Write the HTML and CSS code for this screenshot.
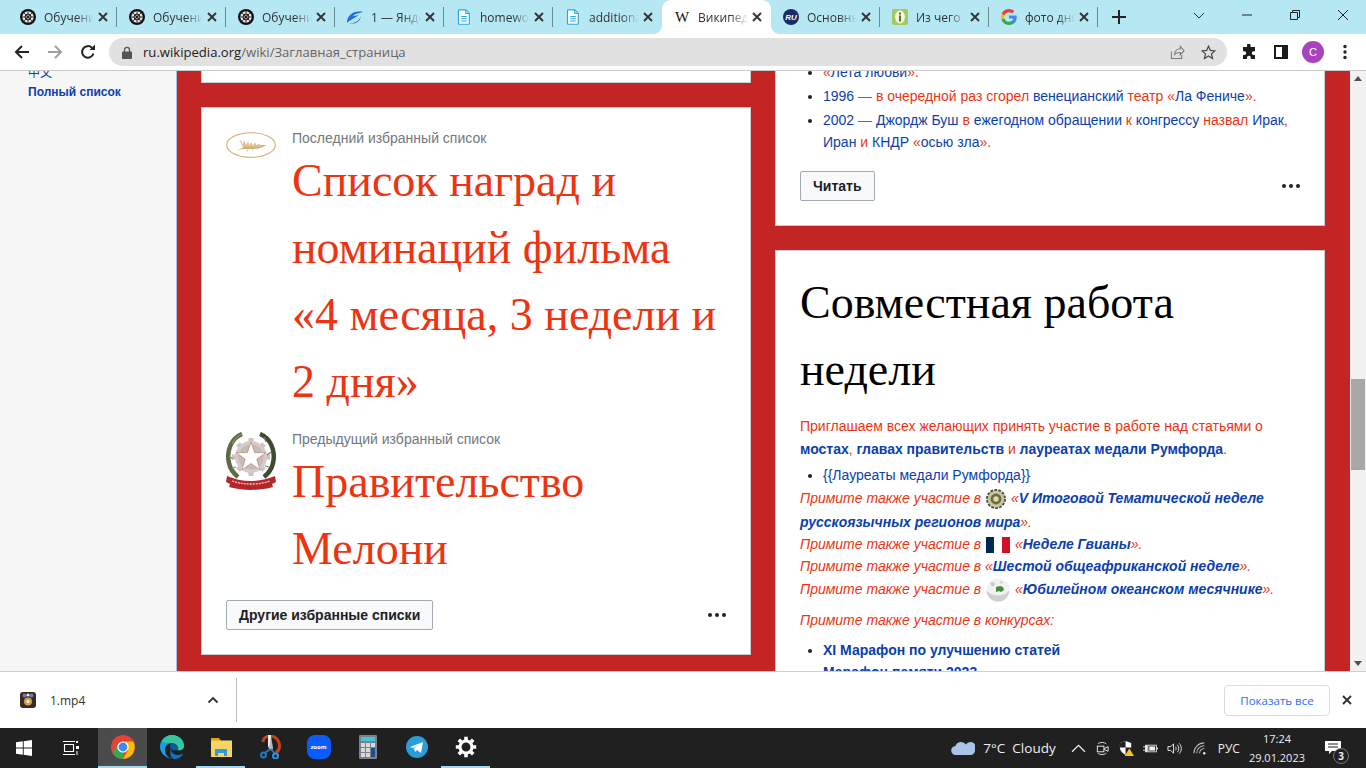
FILE: index.html
```html
<!DOCTYPE html>
<html lang="ru">
<head>
<meta charset="utf-8">
<title>Википедия</title>
<link rel="stylesheet" href="styles.css">
</head>
<body>
<svg class="defs" width="0" height="0" aria-hidden="true">
  <symbol id="brain" viewBox="0 0 16 16">
    <circle cx="8" cy="8" r="8" fill="#111"/>
    <circle cx="8" cy="8" r="5.700" fill="#e2e2e2"/>
    <circle cx="8" cy="8" r="3" fill="none" stroke="#111" stroke-width=".9"/>
    <path d="M8 2.300v11.400M2.300 8h11.400M4 4l8 8M12 4l-8 8" fill="none" stroke="#111" stroke-width=".8"/>
  </symbol>
  <symbol id="doc" viewBox="0 0 16 18">
    <path d="M2.500 1h7.500l4 4v11.500a.7.7 0 0 1-.7.7H2.500a.7.7 0 0 1-.7-.7V1.700a.7.7 0 0 1 .7-.7z" fill="#fff" stroke="#2aa8e0" stroke-width="1.300"/>
    <path d="M10 1v4h4M4.800 8.500h6.400M4.800 11h6.400M4.800 13.500h6.400" fill="none" stroke="#2aa8e0" stroke-width="1.200"/>
  </symbol>
  <symbol id="x" viewBox="0 0 10 10">
    <path d="M1 1l8 8M9 1l-8 8" fill="none" stroke="#333" stroke-width="1.900"/>
  </symbol>
</svg>

<div class="tabstrip">
  <div class="tab"><svg class="fav"><use href="#brain"/></svg><span class="tab-title">Обучение</span><svg class="tab-x"><use href="#x"/></svg></div>
  <div class="tab"><svg class="fav"><use href="#brain"/></svg><span class="tab-title">Обучение</span><svg class="tab-x"><use href="#x"/></svg></div>
  <div class="tab"><svg class="fav"><use href="#brain"/></svg><span class="tab-title">Обучение</span><svg class="tab-x"><use href="#x"/></svg></div>
  <div class="tab">
    <svg class="fav" viewBox="0 0 16 16"><path d="M0 14C0 6 7 1 16 3c-3 0-4 3-7 5-3 2-6 3-9 6z" fill="#1f6fe0"/><path d="M2 14c4 1 10-1 12-7-1 6-7 9-12 7z" fill="#123d8f"/><path d="M6 7c2-2 5-3 8-3-2 2-5 3-8 3z" fill="#cfe9ff"/></svg>
    <span class="tab-title">1 — Яндекс</span><svg class="tab-x"><use href="#x"/></svg></div>
  <div class="tab"><svg class="fav"><use href="#doc"/></svg><span class="tab-title">homework</span><svg class="tab-x"><use href="#x"/></svg></div>
  <div class="tab tab-nosep"><svg class="fav"><use href="#doc"/></svg><span class="tab-title">additional</span><svg class="tab-x"><use href="#x"/></svg></div>
  <div class="tab tab-active tab-nosep"><span class="fav fav-w">W</span><span class="tab-title">Википедия</span><svg class="tab-x"><use href="#x"/></svg></div>
  <div class="tab">
    <svg class="fav" viewBox="0 0 16 16"><circle cx="8" cy="8" r="8" fill="#1d2a63"/><text x="8" y="10.800" text-anchor="middle" class="ru-mark">RU</text></svg>
    <span class="tab-title">Основные</span><svg class="tab-x"><use href="#x"/></svg></div>
  <div class="tab">
    <svg class="fav" viewBox="0 0 16 16"><rect width="16" height="16" rx="2" fill="#a4c95f"/><ellipse cx="8" cy="8" rx="5" ry="6.500" fill="#f3f5dc"/><rect x="7" y="6.500" width="2" height="6" fill="#4c7a22"/><rect x="7" y="3.500" width="2" height="2" fill="#4c7a22"/></svg>
    <span class="tab-title">Из чего</span><svg class="tab-x"><use href="#x"/></svg></div>
  <div class="tab">
    <svg class="fav" viewBox="0 0 16 16"><path d="M15.700 8.200c0-.6 0-1.100-.1-1.600H8v3h4.400c-.2 1-.8 1.900-1.600 2.400v2h2.600c1.500-1.400 2.300-3.400 2.300-5.800z" fill="#4285f4"/><path d="M8 16c2.200 0 4-.7 5.400-2l-2.600-2c-.7.500-1.700.8-2.800.8-2.100 0-3.900-1.400-4.600-3.400H.7v2.100C2 14.200 4.800 16 8 16z" fill="#34a853"/><path d="M3.400 9.400c-.4-1-.4-2 0-3V4.300H.7c-.9 1.800-.9 3.900 0 5.700l2.700-.6z" fill="#fbbc05"/><path d="M8 3.200c1.200 0 2.300.4 3.100 1.200l2.300-2.300C12 .8 10.200 0 8 0 4.800 0 2 1.800.7 4.300l2.700 2.100C4.100 4.500 5.900 3.200 8 3.200z" fill="#ea4335"/></svg>
    <span class="tab-title">фото дня</span><svg class="tab-x"><use href="#x"/></svg></div>
  <svg class="newtab" viewBox="0 0 14 14"><path d="M7 0v14M0 7h14" stroke="#222" stroke-width="2" fill="none"/></svg>
  <div class="winctl">
    <svg class="wc" viewBox="0 0 12 12"><path d="M1 4l5 5 5-5" fill="none" stroke="#333" stroke-width="1"/></svg>
    <svg class="wc" viewBox="0 0 12 12"><path d="M1 6h10" fill="none" stroke="#222" stroke-width="1"/></svg>
    <svg class="wc" viewBox="0 0 12 12"><path d="M1.500 3.500h7v7h-7zM3.500 3.500v-2h7v7h-2" fill="none" stroke="#222" stroke-width="1"/></svg>
    <svg class="wc" viewBox="0 0 12 12"><path d="M1 1l10 10M11 1L1 11" fill="none" stroke="#222" stroke-width="1"/></svg>
  </div>
</div>

<div class="toolbar">
  <svg class="tb-ico" viewBox="0 0 16 16"><path d="M15 8H2M8 2L2 8l6 6" fill="none" stroke="#222" stroke-width="2"/></svg>
  <svg class="tb-ico" viewBox="0 0 16 16"><path d="M1 8h13M8 2l6 6-6 6" fill="none" stroke="#a0a0a0" stroke-width="2"/></svg>
  <svg class="tb-ico tb-reload" viewBox="0 0 16 16"><path d="M13.500 9.500A5.800 5.800 0 1 1 12 3.800" fill="none" stroke="#222" stroke-width="2"/><path d="M9.500 6h5.500V.5z" fill="#222"/></svg>
  <div class="omnibox">
    <svg class="lock" viewBox="0 0 10 13"><path d="M2.500 6V3.800a2.500 2.500 0 0 1 5 0V6" fill="none" stroke="#555" stroke-width="1.300"/><rect y="5.500" width="10" height="7.500" rx="1" fill="#555"/></svg>
    <span class="url"><span class="url-host">ru.wikipedia.org</span>/wiki/Заглавная_страница</span>
    <svg class="omni-ico omni-share" viewBox="0 0 16 16"><path d="M1.500 7v7.500h11V11M5 10c0-4 3-6 6-6V1.500L15 6l-4 4.500V8c-3 0-5 .5-6 2z" fill="none" stroke="#777" stroke-width="1.100"/></svg>
    <svg class="omni-ico" viewBox="0 0 16 16"><path d="M8 1.300l2 4.500 4.900.5-3.700 3.200 1.100 4.800L8 11.800l-4.300 2.500 1.100-4.800L1.100 6.300 6 5.800z" fill="none" stroke="#444" stroke-width="1.300"/></svg>
  </div>
  <svg class="tb-right tb-puzzle" viewBox="0 0 16 16"><path d="M6 1.500a1.800 1.800 0 0 1 3.600 0V3H14v4.200h-1.300a1.900 1.900 0 0 0 0 3.800H14v4H9.800v-1.300a1.900 1.900 0 0 0-3.800 0V15H2v-4h1.300a1.900 1.900 0 0 0 0-3.800H2V3h4z" fill="#1c1c1c"/></svg>
  <svg class="tb-right tb-panel" viewBox="0 0 14 14"><rect x="1" y="1" width="12" height="12" fill="#fff" stroke="#1c1c1c" stroke-width="2"/><rect x="8" y="1" width="5" height="12" fill="#1c1c1c"/></svg>
  <span class="avatar">C</span>
  <svg class="tb-right tb-dots" viewBox="0 0 4 16"><circle cx="2" cy="2.500" r="1.700" fill="#222"/><circle cx="2" cy="8" r="1.700" fill="#222"/><circle cx="2" cy="13.500" r="1.700" fill="#222"/></svg>
</div>

<div class="viewport">
  <aside class="sidebar">
    <div class="side-links">
      <a class="side-cjk">中文</a>
      <a class="side-all">Полный список</a>
    </div>
  </aside>
  <main class="main">
    <div class="column">
      <section class="card card-stub"></section>
      <section class="card">
        <div class="featured">
          <div class="fig">
            <svg class="palm" viewBox="0 0 50 26">
              <ellipse cx="25" cy="13" rx="24.300" ry="12.300" fill="#fff" stroke="#d2ad72" stroke-width="1.100"/>
              <path d="M10 19c3-1 6-3 8-4 8-1 15-2 23-2-5 3-10 4-16 4-2 0-5 0-7 0-2 0-5 1-8 2z" fill="#d3ae72"/>
              <path d="M14 8l3 6 1-5 2 5 2-4 1 4 2-3 2 3 2-3 1 3 3-2 1 2 3-1-2 2H17zM21 20l1-3M26 19l1-2M31 18l1-2" fill="#e0c492" stroke="#d3ae72" stroke-width=".5"/>
            </svg>
          </div>
          <div class="feat-body">
            <div class="feat-label">Последний избранный список</div>
            <h2 class="feat-title">Список наград и номинаций фильма «4 месяца, 3 недели и 2 дня»</h2>
          </div>
        </div>
        <div class="featured featured-next">
          <div class="fig">
            <svg class="emblem" viewBox="0 0 50 58">
              <path d="M25 6v5M25 39v5M6 25h5M39 25h5M12 12l3.500 3.500M34.500 34.500L38 38M38 12l-3.500 3.500M15.500 34.500L12 38" stroke="#c9c3bf" stroke-width="5"/>
              <circle cx="25" cy="25" r="16" fill="#d2cdc9"/>
              <circle cx="25" cy="25" r="12.500" fill="#c2bbb7"/>
              <path d="M25 10l3.600 10.600h11.200l-9 6.600 3.400 10.800-9.200-6.500-9.200 6.500 3.400-10.800-9-6.600h11.200z" fill="#fff" stroke="#c0524c" stroke-width=".5"/>
              <path d="M16 2C6 6 0 18 3 31c1 5 4 10 9 14" fill="none" stroke="#5d6a45" stroke-width="4.500"/>
              <path d="M16 2c-4 2-8 5-10 10M3 24l4 3M6 36l4-1" fill="none" stroke="#87936c" stroke-width="1.200"/>
              <path d="M34 2c10 4 16 16 13 29-1 5-4 10-9 14" fill="none" stroke="#3e4b30" stroke-width="4.500"/>
              <path d="M38 5l2 5M45 20l-4 3M43 35l-4-1" fill="none" stroke="#77845f" stroke-width="1.200"/>
              <path d="M1 44c7 3 15 5 24 5s17-2 24-5l1 6-4 2 1 3c-7 2-15 3-22 3s-15-1-22-3l1-3-4-2z" fill="#b5262b"/>
              <path d="M6 49c6 2 12 3 19 3s13-1 19-3" fill="none" stroke="#eecfc8" stroke-width="1.300" stroke-dasharray="2 1"/>
            </svg>
          </div>
          <div class="feat-body">
            <div class="feat-label">Предыдущий избранный список</div>
            <h2 class="feat-title">Правительство Мелони</h2>
          </div>
        </div>
        <div class="card-foot card-foot-left">
          <a class="btn">Другие избранные списки</a>
          <span class="more"><i></i><i></i><i></i></span>
        </div>
      </section>
    </div>

    <div class="column">
      <section class="card card-events">
        <ul class="list list-clipped">
          <li><span class="r">«</span><a>Лета любви</a><span class="r">».</span></li>
          <li><a>1996</a> <span class="r">— в очередной раз сгорел</span> <a>венецианский</a> <span class="r">театр «</span><a>Ла Фениче</a><span class="r">».</span></li>
          <li><a>2002</a> <span class="r">—</span> <a>Джордж Буш</a> <span class="r">в</span> <a>ежегодном обращении</a> <span class="r">к</span> <a>конгрессу</a> <span class="r">назвал</span> <a>Ирак</a><span class="r">,</span> <a>Иран</a> <span class="r">и</span> <a>КНДР</a> <span class="r">«</span><a>осью зла</a><span class="r">».</span></li>
        </ul>
        <div class="card-foot card-foot-right">
          <a class="btn">Читать</a>
          <span class="more"><i></i><i></i><i></i></span>
        </div>
      </section>
      <section class="card card-collab">
        <h2 class="collab-title">Совместная работа недели</h2>
        <p class="para"><span class="r">Приглашаем всех желающих принять участие в работе над статьями о</span> <a class="b">мостах</a><span class="r">,</span> <a class="b">главах правительств</a> <span class="r">и</span> <a class="b">лауреатах медали Румфорда</a><span class="r">.</span></p>
        <ul class="list list-tpl"><li><a>{{Лауреаты медали Румфорда}}</a></li></ul>
        <div class="invites">
          <div class="r-i invite-tall">Примите также участие в
            <svg class="inl" viewBox="0 0 22 22"><circle cx="11" cy="11" r="10" fill="#c8c4a4"/><circle cx="11" cy="11" r="10" fill="none" stroke="#44512c" stroke-width="2" stroke-dasharray="3 1.500"/><circle cx="11" cy="11" r="6" fill="#6b6a42"/><circle cx="11" cy="11" r="3" fill="#e2d9a0"/></svg>
            «<a class="b">V Итоговой Тематической неделе русскоязычных регионов мира</a>».</div>
          <div class="r-i">Примите также участие в
            <svg class="inl inl-flag" viewBox="0 0 3 2"><rect width="1" height="2" fill="#002654"/><rect x="1" width="1" height="2" fill="#fff"/><rect x="2" width="1" height="2" fill="#ce1126"/></svg>
            «<a class="b">Неделе Гвианы</a>».</div>
          <div class="r-i">Примите также участие в «<a class="b">Шестой общеафриканской неделе</a>».</div>
          <div class="r-i">Примите также участие в
            <svg class="inl inl-globe" viewBox="0 0 24 24"><circle cx="12" cy="12" r="11.500" fill="#f2f2f2"/><path d="M0.500 12a11.500 11.500 0 0 0 23 0c-4 7-19 7-23 0z" fill="#cfcfcf"/><path d="M10 9l4-1 3 1 1 3-3 2-2-1-3 1z" fill="#3f8a3c"/><path d="M4 5l4-1 1 3-3 2zM14 3l3 1-2 2z" fill="#c9c9c9"/></svg>
            «<a class="b">Юбилейном океанском месячнике</a>».</div>
        </div>
        <p class="r-i contest">Примите также участие в конкурсах:</p>
        <ul class="list list-bold">
          <li><a class="b">XI Марафон по улучшению статей</a></li>
          <li><a class="b">Марафон памяти 2023</a></li>
        </ul>
      </section>
    </div>
  </main>
  <div class="scrollbar">
    <span class="sb-up"></span>
    <span class="sb-thumb"></span>
    <span class="sb-down"></span>
  </div>
</div>

<div class="downloads">
  <div class="dl-item">
    <svg class="dl-ico" viewBox="0 0 16 16"><rect width="16" height="16" rx="3" fill="#3a2a20"/><circle cx="8" cy="9.500" r="4" fill="#c9a15a"/><circle cx="8" cy="9.500" r="1.500" fill="#fff2c0"/><circle cx="4.500" cy="3.500" r="2" fill="#6f79c8"/><circle cx="11.500" cy="3.500" r="2" fill="#6f79c8"/><circle cx="8" cy="3" r="1.500" fill="#eee"/></svg>
    <span class="dl-name">1.mp4</span>
    <svg class="dl-chev" viewBox="0 0 12 8"><path d="M1.500 6.500L6 2l4.500 4.500" fill="none" stroke="#333" stroke-width="1.800"/></svg>
  </div>
  <div class="dl-right">
    <a class="dl-btn">Показать все</a>
    <svg class="dl-x" viewBox="0 0 10 10"><use href="#x"/></svg>
  </div>
</div>

<div class="taskbar">
  <div class="tk-start">
    <svg class="tk-ico" viewBox="0 0 16 16"><path d="M0 2.300L6.800 1.300v6.300H0zM7.700 1.200L16 0v7.600H7.700zM0 8.400h6.800v6.300L0 13.700zM7.700 8.400H16V16l-8.300-1.200z" fill="#fff"/></svg>
  </div>
  <div class="tk-view">
    <svg class="tk-ico" viewBox="0 0 16 16"><path d="M1.500 4.500h9v7h-9zM0 1.500h12M0 14.500h12" fill="none" stroke="#fff" stroke-width="1.100"/><rect x="13" y="1" width="2" height="2" fill="#fff"/><rect x="13" y="6" width="3" height="3" fill="#fff"/><path d="M14 11v4" stroke="#fff"/></svg>
  </div>
  <div class="tk-app tk-active tk-open">
    <svg class="tk-app-ico" viewBox="0 0 24 24"><circle cx="12" cy="12" r="12" fill="#ea4335"/><path d="M12 24a12 12 0 0 1-10.400-6L7 8.500l5 8.500z" fill="#34a853"/><path d="M12 6.500h10.400A12 12 0 0 1 12 24l5.200-9z" fill="#fbbc05"/><circle cx="12" cy="12" r="5.600" fill="#fff"/><circle cx="12" cy="12" r="4.400" fill="#4285f4"/></svg>
  </div>
  <div class="tk-app">
    <svg class="tk-app-ico" viewBox="0 0 24 24"><path d="M12 0c7 0 12 5 12 11 0 3-3 5-6 4 1-3-1-7-6-7-4 0-7 3-7 7 0 5 4 9 9 9C6 24 0 18 0 12 0 5 5 0 12 0z" fill="#1b9de2"/><path d="M12 8c5 0 7 4 6 7-3 1-8 0-8-3 0-2 1-3 2-4z" fill="#0c59a4"/><path d="M2 6c3-5 8-6 10-6 7 0 12 5 12 11 0 3-3 5-6 4 1-3-1-7-6-7-4 0-8 0-10-2z" fill="#37c6a0"/><path d="M14 24c4 0 8-2 9-6-2 2-6 3-9 1-2-1-3-3-3-5-2 4 0 9 3 10z" fill="#1472c4"/></svg>
  </div>
  <div class="tk-app tk-open">
    <svg class="tk-app-ico" viewBox="0 0 24 24"><path d="M2 3h8l2 3v3H2z" fill="#e3a21f"/><rect x="2" y="5.500" width="21" height="16.500" fill="#f6d565"/><path d="M6 21v-7h12v7h-3v-3H9v3z" fill="#2f9ae0"/></svg>
  </div>
  <div class="tk-app">
    <svg class="tk-app-ico" viewBox="0 0 24 24"><path d="M5 7C5 1 14-1 19 4c4 5 3 11-1 14" fill="none" stroke="#c8401c" stroke-width="3"/><path d="M13 0v13l-1 3-2-5V0z" fill="#eee"/><path d="M13 1l2 12 -1 3-3-3z" fill="#b8b8b8"/><path d="M12 14l-5 4M13 14l4 5" stroke="#1f78c8" stroke-width="2"/><circle cx="5.500" cy="20" r="2.500" fill="none" stroke="#1f78c8" stroke-width="2"/><circle cx="17.500" cy="21" r="2.500" fill="none" stroke="#1f9ae8" stroke-width="2"/></svg>
  </div>
  <div class="tk-app">
    <span class="zoom-tile">zoom</span>
  </div>
  <div class="tk-app">
    <svg class="tk-app-ico" viewBox="0 0 18 24"><rect width="18" height="24" rx="1" fill="#7b8188"/><rect x="2" y="2" width="14" height="4" fill="#43c6d8"/><path d="M2 8h4v4H2zM7 8h4v4H7zM12 8h4v4h-4zM2 13h4v4H2zM7 13h4v4H7zM2 18h4v4H2zM7 18h4v4H7z" fill="#d5d8dc"/><rect x="12" y="13" width="4" height="9" fill="#1f4e8c"/></svg>
  </div>
  <div class="tk-app">
    <svg class="tk-app-ico" viewBox="0 0 24 24"><circle cx="12" cy="12" r="11" fill="#2a9ed8"/><path d="M5 12l13-5-2 11-4-3-2 2-1-4 6-4-7 4z" fill="#fff"/></svg>
  </div>
  <div class="tk-app tk-open">
    <svg class="tk-app-ico" viewBox="0 0 20 20"><path d="M10 1.500v3M10 15.500v3M1.500 10h3M15.500 10h3M4 4l2.100 2.100M13.900 13.900L16 16M16 4l-2.100 2.100M6.100 13.900L4 16" stroke="#fff" stroke-width="3"/><circle cx="10" cy="10" r="5" fill="none" stroke="#fff" stroke-width="2.600"/></svg>
  </div>
  <div class="tk-tray">
    <svg class="tr-cloud" viewBox="0 0 24 14"><path d="M5 14a4.500 4.500 0 0 1-.6-9A6 6 0 0 1 15 3.500 5.200 5.200 0 0 1 24 9a4.700 4.700 0 0 1-4.500 5z" fill="#a9c4e8"/></svg>
    <span class="tr-weather">7°C&nbsp; Cloudy</span>
    <svg class="tr-ico tr-first" viewBox="0 0 14 14"><path d="M1 10l6-6 6 6" fill="none" stroke="#eee" stroke-width="1.200"/></svg>
    <svg class="tr-ico" viewBox="0 0 14 16"><path d="M2 3c2-2 7-2 9 0M2 13c2 2 7 2 9 0" fill="none" stroke="#ddd"/><rect x="1.500" y="5.500" width="7" height="6" fill="none" stroke="#eee"/><path d="M9 8l4-2v5l-4-2z" fill="none" stroke="#eee"/></svg>
    <svg class="tr-ico" viewBox="0 0 16 16"><path d="M7 0l6 2v5c0 4-3 6-6 8-3-2-6-4-6-8V2z" fill="#fff"/><path d="M1 7h6V0l-6 2zM7 7h6v1c0 3-3 5-6 7z" fill="#202020"/><path d="M11 8l5 8H6z" fill="#f5c518"/></svg>
    <svg class="tr-ico" viewBox="0 0 18 14"><path d="M0 5h3M0 9h3M3 3h2v8H3z" stroke="#eee" fill="#eee"/><rect x="6" y="3" width="10" height="8" fill="none" stroke="#eee"/><rect x="7.500" y="4.500" width="7" height="5" fill="#eee"/><rect x="16.500" y="6" width="1.500" height="2" fill="#eee"/></svg>
    <svg class="tr-ico" viewBox="0 0 16 14"><path d="M1 5h3l3-3v10L4 9H1z" fill="none" stroke="#eee"/><path d="M9 5c1 1 1 3 0 4M11 3c2 2 2 6 0 8M13 1.500c3 3 3 8 0 11" fill="none" stroke="#eee"/></svg>
    <svg class="tr-ico tr-wifi" viewBox="0 0 16 14"><path d="M1 12A11 11 0 0 1 12 1M4 12a8 8 0 0 1 8-8M7 12a5 5 0 0 1 5-5" fill="none" stroke="#bbb" stroke-width="1.100"/><circle cx="12" cy="12" r="1.300" fill="#eee"/></svg>
    <span class="tr-lang">РУС</span>
    <div class="tr-clock"><span>17:24</span><span>29.01.2023</span></div>
    <div class="tr-note">
      <svg class="tr-msg" viewBox="0 0 16 14"><path d="M0 0h16v10H7l-3 3v-3H0z" fill="#fff"/><path d="M3 3h10M3 6h10" stroke="#202020"/></svg>
      <span class="tr-badge">3</span>
    </div>
  </div>
</div>
</body>
</html>
```

FILE: styles.css
```css
* { box-sizing: border-box; }
html, body { margin: 0; height: 100%; overflow: hidden; }
body {
  display: flex;
  flex-direction: column;
  width: 1366px;
  height: 768px;
  font-family: "Liberation Sans", Arial, sans-serif;
  background: #fff;
}
.defs { position: absolute; }

/* tab strip */
.tabstrip {
  flex: none;
  height: 34px;
  display: flex;
  align-items: center;
  padding-left: 8px;
  background: #b6e8f3;
  font-family: "Open Sans", sans-serif;
  font-size: 12px;
  color: #333;
}
.tab {
  position: relative;
  flex: none;
  width: 109px;
  height: 34px;
  display: flex;
  align-items: center;
  padding-left: 12px;
}
.tab::after {
  content: "";
  position: absolute;
  right: 0;
  top: 7px;
  width: 1px;
  height: 20px;
  background: #6d8a91;
}
.tab-nosep::after { content: none; }
.tab-active {
  background: #fff;
  border-radius: 9px 9px 0 0;
}
.tab-active::before,
.tab-active::after {
  content: "";
  position: absolute;
  bottom: 0;
  top: auto;
  width: 8px;
  height: 8px;
  background: radial-gradient(circle at 0 0, transparent 7.500px, #fff 8px);
}
.tab-active::before {
  left: -8px;
}
.tab-active::after {
  right: -8px;
  background: radial-gradient(circle at 100% 0, transparent 7.500px, #fff 8px);
}
.fav { flex: none; width: 16px; height: 16px; }
.fav-w {
  font-family: "Liberation Serif", serif;
  font-size: 15px;
  line-height: 16px;
  text-align: center;
  color: #111;
}
.ru-mark { font: italic 700 8px "Liberation Sans", sans-serif; fill: #fff; }
.tab-title {
  flex: none;
  width: 50px;
  margin-left: 8px;
  overflow: hidden;
  white-space: nowrap;
  -webkit-mask-image: linear-gradient(90deg, #000 65%, transparent 100%);
  mask-image: linear-gradient(90deg, #000 65%, transparent 100%);
}
.tab-x { flex: none; width: 10px; height: 10px; margin-left: 4px; }
.newtab { flex: none; width: 14px; height: 14px; margin-left: 14px; }
.winctl {
  margin-left: auto;
  display: flex;
  align-items: center;
  height: 34px;
  padding-right: 17px;
  gap: 36px;
}
.wc { width: 12px; height: 12px; margin-top: -4px; }

/* toolbar */
.toolbar {
  flex: none;
  height: 37px;
  display: flex;
  align-items: center;
  padding-left: 14px;
  background: #fff;
  border-bottom: 1px solid #c9c9c9;
}
.tb-ico { flex: none; width: 16px; height: 16px; margin-right: 17px; }
.tb-reload { margin-right: 13px; }
.omnibox {
  flex: none;
  width: 1118px;
  height: 28px;
  display: flex;
  align-items: center;
  padding-left: 13px;
  border-radius: 14px;
  background: #e1e1e1;
}
.lock { width: 10px; height: 13px; flex: none; }
.url { margin-left: 11px; font-family: "Open Sans", sans-serif; font-size: 13.100px; color: #666; white-space: nowrap; }
.url-host { color: #222; }
.omni-ico { flex: none; width: 15px; height: 15px; margin-left: 16px; }
.omni-share { margin-left: auto; }
.omni-ico:last-child { margin-right: 11px; }
.tb-right { flex: none; }
.tb-puzzle { width: 16px; height: 16px; margin-left: 14px; }
.tb-panel { width: 14px; height: 14px; margin-left: 17px; }
.avatar {
  flex: none;
  width: 22px;
  height: 22px;
  margin-left: 14px;
  border-radius: 50%;
  background: #a744bd;
  color: #fff;
  font-size: 11px;
  line-height: 22px;
  text-align: center;
}
.tb-dots { width: 4px; height: 16px; margin-left: 19px; }

/* page viewport */
.viewport {
  flex: none;
  height: 600px;
  display: flex;
  overflow: hidden;
  font-size: 14px;
  color: #202122;
}
.sidebar {
  flex: none;
  width: 177px;
  background: #f6f6f6;
  border-right: 1px solid #a7c0dc;
  padding-left: 28px;
  font-size: 12px;
}
.side-links { margin-top: -9px; display: flex; flex-direction: column; }
.side-links a { color: #0b3eae; line-height: 20px; }
.side-cjk { font-family: "Noto Sans CJK SC", sans-serif; }
.side-all { font-weight: 700; }

.main {
  flex: none;
  width: 1173px;
  height: 600px;
  display: flex;
  gap: 24px;
  padding-left: 24px;
  overflow: hidden;
  background: #c32525;
}
.column { flex: none; width: 550px; display: flex; flex-direction: column; gap: 24px; }
.card {
  flex: none;
  background: #fff;
  border: 1px solid #c8ccd1;
  padding: 19px 24px 24px;
}
.card-stub { height: 12px; padding: 0; border-top: none; }
.featured { display: flex; }
.featured-next { margin-top: 11px; }
.fig { flex: none; width: 66px; }
.palm { display: block; width: 50px; height: 26px; margin-top: 5px; }
.emblem { display: block; width: 50px; height: 58px; margin-top: 4px; }
.feat-body { flex: 1; min-width: 0; }
.feat-label { font-size: 14px; line-height: 22px; color: #72777d; }
.feat-title, .collab-title {
  margin: -2px 0 2px;
  font-family: "Liberation Serif", serif;
  font-size: 46px;
  font-weight: 400;
  line-height: 67px;
}
.feat-title { color: #ee3311; }
.collab-title { margin-top: -1px; color: #000; }
.card-foot { display: flex; align-items: center; justify-content: space-between; }
.card-foot-left { margin-top: 16px; }
.card-foot-right { margin-top: 18px; }
.btn {
  height: 30px;
  padding: 0 12px;
  border: 1px solid #a2a9b1;
  border-radius: 2px;
  background: #f8f9fa;
  color: #202122;
  font-weight: 700;
  line-height: 28px;
}
.more { display: flex; gap: 3px; }
.more i { width: 4px; height: 4px; border-radius: 50%; background: #222; }

.r { color: #ee3311; }
.r-i { color: #ee3311; font-style: italic; }
a { color: #0b3eae; }
a.b { font-weight: 700; }
.list { margin: 0; padding: 0 0 0 23px; line-height: 22.400px; }
.list li { margin-bottom: 1.400px; }
.list-clipped { margin-top: -28px; }
.card-events { padding-top: 18px; border-top: none; }
.para { margin: 0; line-height: 22.400px; }
.collab-title + .para { margin-top: 12px; }
.list-tpl { margin-top: 4px; }
.invites { margin-top: -2px; line-height: 22.400px; }
.invite-tall { margin-bottom: -1px; line-height: 24px; }
.inl { width: 20px; height: 20px; vertical-align: middle; margin: 0 1px; }
.inl-flag { width: 24px; height: 16px; margin: -3px 1px; }
.inl-globe { width: 24px; height: 24px; }
.contest { margin: 7px 0 0; line-height: 22.400px; }
.list-bold { margin-top: 7px; }
.list-bold li { margin-bottom: 0; }

/* scrollbar */
.scrollbar {
  flex: none;
  width: 16px;
  height: 600px;
  position: relative;
  background: #f1f1f1;
}
.sb-up, .sb-down {
  position: absolute;
  left: 4px;
  width: 0;
  height: 0;
  border-left: 4px solid transparent;
  border-right: 4px solid transparent;
}
.sb-up { top: 5px; border-bottom: 5px solid #505050; }
.sb-down { bottom: 5px; border-top: 5px solid #505050; }
.sb-thumb { position: absolute; left: 1px; top: 308px; width: 14px; height: 91px; background: #a8a8a8; }

/* downloads */
.downloads {
  flex: none;
  height: 57px;
  display: flex;
  align-items: center;
  justify-content: space-between;
  padding: 0 14px 0 20px;
  background: #fff;
  border-top: 1px solid #cfcfcf;
}
.dl-item { display: flex; align-items: center; width: 217px; height: 44px; border-right: 1px solid #bdbdbd; }
.dl-ico { flex: none; width: 16px; height: 16px; }
.dl-name { margin-left: 14px; font-family: "Open Sans", sans-serif; font-size: 12px; color: #333; }
.dl-chev { flex: none; width: 12px; height: 8px; margin-left: 122px; }
.dl-right { display: flex; align-items: center; gap: 12px; }
.dl-btn {
  width: 106px;
  height: 31px;
  border: 1px solid #dadce0;
  border-radius: 4px;
  font-family: "Open Sans", sans-serif;
  font-size: 11.500px;
  line-height: 29px;
  text-align: center;
  color: #1a73e8;
}
.dl-x { flex: none; width: 10px; height: 10px; }

/* taskbar */
.taskbar {
  flex: none;
  height: 40px;
  display: flex;
  align-items: center;
  background: #202020;
  color: #eee;
  font-family: "Open Sans", sans-serif;
}
.tk-start { flex: none; width: 48px; display: flex; justify-content: center; }
.tk-view { flex: none; width: 46px; margin-right: 4px; display: flex; justify-content: center; }
.tk-ico { width: 16px; height: 16px; }
.tk-app {
  flex: none;
  width: 49px;
  height: 40px;
  display: flex;
  align-items: center;
  justify-content: center;
  border-bottom: 2px solid transparent;
}
.tk-open { border-bottom-color: #9fd8ef; }
.tk-active { background: #4b4b4b; }
.tk-app-ico { width: 24px; height: 24px; }
.zoom-tile {
  width: 24px;
  height: 24px;
  border-radius: 8px;
  background: #0b5cff;
  color: #fff;
  font-size: 6px;
  font-weight: 700;
  line-height: 24px;
  text-align: center;
}
.tk-tray { margin-left: auto; display: flex; align-items: center; height: 40px; padding-right: 8px; }
.tr-cloud { flex: none; width: 24px; height: 14px; }
.tr-weather { margin-left: 8px; font-size: 13.500px; white-space: nowrap; }
.tr-ico { flex: none; width: 15px; height: 15px; margin-left: 9px; }
.tr-first { margin-left: 15px; }
.tr-wifi { margin-left: 11px; }
.tr-lang { margin-left: 10px; font-size: 12px; }
.tr-clock { display: flex; flex-direction: column; align-items: center; margin-left: 9px; font-size: 11px; line-height: 19px; }
.tr-note { position: relative; width: 38px; height: 40px; margin-left: 15px; }
.tr-msg { position: absolute; left: 5px; top: 13px; width: 16px; height: 14px; }
.tr-badge {
  position: absolute;
  left: 13px;
  top: 20px;
  width: 16px;
  height: 16px;
  border: 1px solid #777;
  border-radius: 50%;
  background: #202020;
  font-size: 10px;
  font-weight: 700;
  line-height: 14px;
  text-align: center;
}
```
